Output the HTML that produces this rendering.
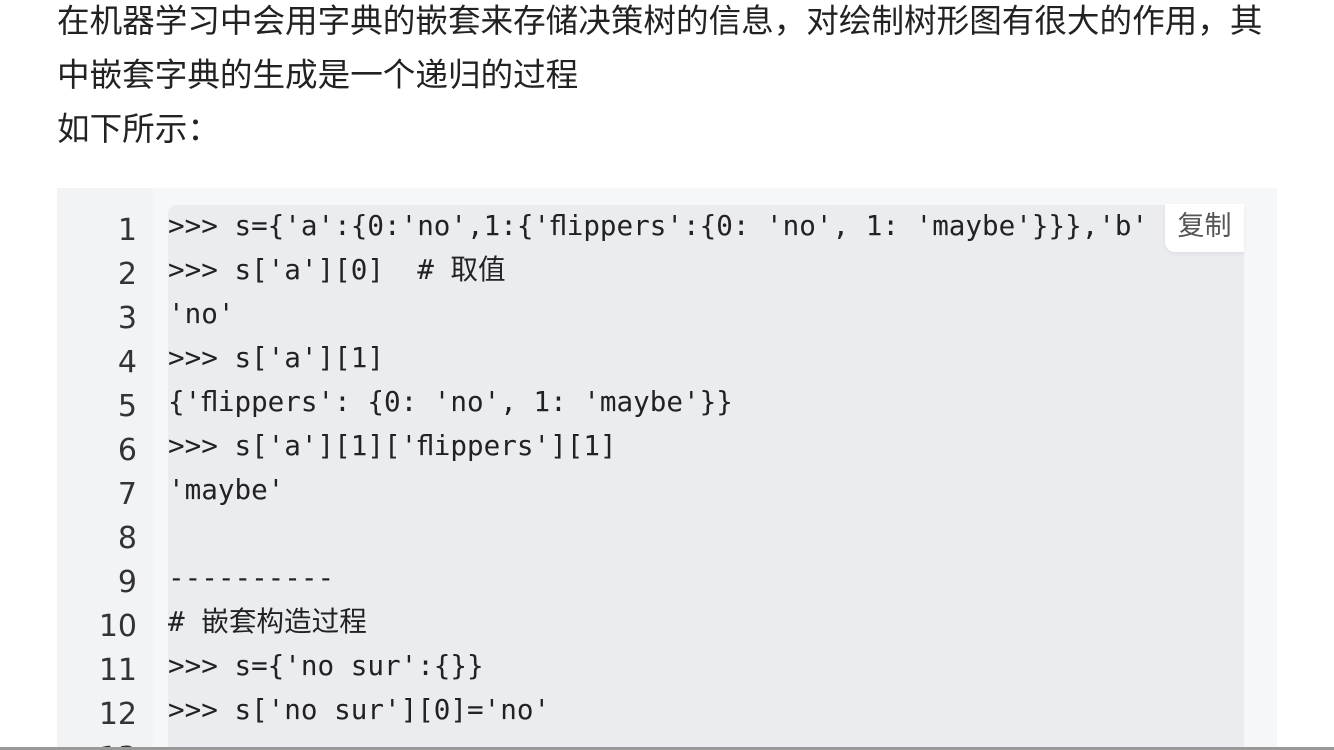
<!DOCTYPE html>
<html><head><meta charset="utf-8"><style>
html,body{margin:0;width:1334px;height:750px;overflow:hidden}
body{background:#fff;position:relative;font-family:"Liberation Sans","Noto Sans CJK SC",sans-serif}
.p{position:absolute;left:57px;top:-6px;font-size:32.6px;line-height:54px;color:#222;width:1240px;white-space:nowrap}
.blk{position:absolute;left:57px;top:188px;width:1220px;height:559px;background:#f6f7f8}
.gut{position:absolute;left:57px;top:188px;width:96px;height:559px;background:#f2f3f5}
.code{position:absolute;left:168px;top:205px;width:1076px;height:542px;background:#ebecef;border-radius:8px 0 0 0}
.clip{position:absolute;left:0;top:0;width:1334px;height:747px;overflow:hidden}
.ln{position:absolute;left:57px;top:209px;width:80px;text-align:right;font-family:"DejaVu Sans","Noto Sans CJK SC",sans-serif;font-size:30px;line-height:44px;color:#333}
.tx{position:absolute;left:168px;top:204px;font-family:"DejaVu Sans Mono","Noto Sans CJK SC",monospace;font-size:27.6px;line-height:44px;color:#222;white-space:pre}
.cp{position:absolute;left:1165px;top:204px;width:79px;height:48px;background:#fff;border-radius:0 0 0 10px;box-shadow:0 2px 4px rgba(0,0,0,.06);font-size:27px;line-height:44px;text-align:center;color:#555}
.bot{position:absolute;left:0;top:747px;width:1334px;height:3px;background:#999}
</style></head><body>
<div class="p">在机器学习中会用字典的嵌套来存储决策树的信息，对绘制树形图有很大的作用，其<br>中嵌套字典的生成是一个递归的过程<br>如下所示：</div>
<div class="clip">
<div class="blk"></div><div class="gut"></div><div class="code"></div>
<div class="ln">1<br>2<br>3<br>4<br>5<br>6<br>7<br>8<br>9<br>10<br>11<br>12<br>13</div>
<div class="tx">&gt;&gt;&gt; s={'a':{0:'no',1:{'ﬂippers':{0: 'no', 1: 'maybe'}}},'b'
&gt;&gt;&gt; s['a'][0]  # 取值
'no'
&gt;&gt;&gt; s['a'][1]
{'ﬂippers': {0: 'no', 1: 'maybe'}}
&gt;&gt;&gt; s['a'][1]['ﬂippers'][1]
'maybe'

----------
# 嵌套构造过程
&gt;&gt;&gt; s={'no sur':{}}
&gt;&gt;&gt; s['no sur'][0]='no'
&gt;&gt;&gt; s</div>
<div class="cp">复制</div>
</div>
<div class="bot"></div>
</body></html>
